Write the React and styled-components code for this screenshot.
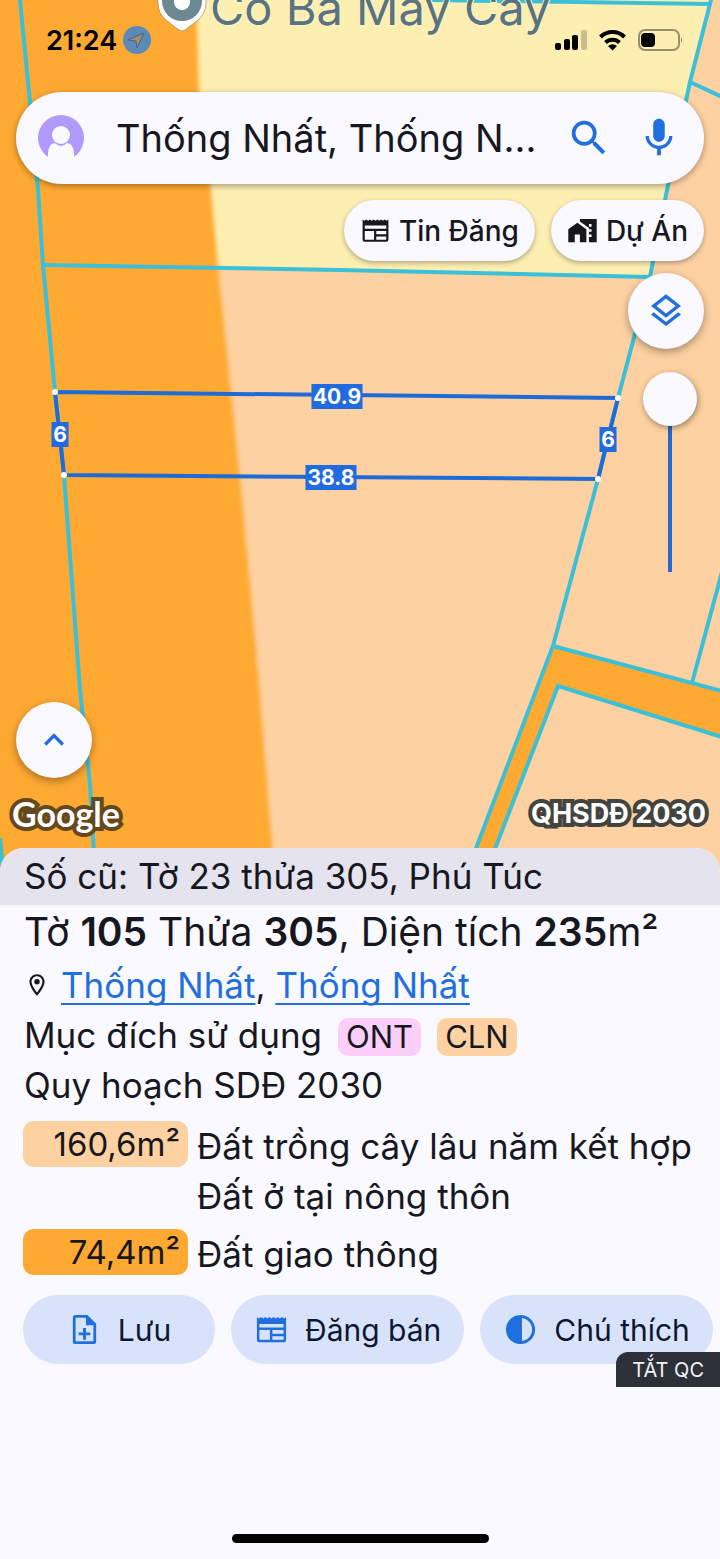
import React, { useState } from 'react';
import styled, { createGlobalStyle } from 'styled-components';
import {
  MdSearch,
  MdMic,
  MdHomeWork,
  MdOutlineLayers,
  MdKeyboardArrowUp,
  MdOutlineLocationOn,
  MdContrast,
} from 'react-icons/md';

const GlobalStyle = createGlobalStyle`
  * {
    box-sizing: border-box;
  }

  body {
    margin: 0;
    background: #faf9ff;
    color: #17181f;
    font-family: Inter, "Liberation Sans", sans-serif;
  }

  button, input {
    font-family: inherit;
    color: inherit;
  }
`;

const Page = styled.div`
  display: flex;
  flex-direction: column;
  min-height: 100vh;
`;

const MapArea = styled.section`
  position: relative;
  isolation: isolate;
  display: flex;
  flex-direction: column;
  flex: 1;
  overflow: hidden;
`;

const MapCanvas = styled.svg`
  position: absolute;
  z-index: -1;
  top: 0;
  left: 0;
  width: 100%;
  height: 100%;
`;

const MeasureText = styled.text`
  font-size: 21px;
  font-weight: 700;
  text-anchor: middle;
  fill: #fff;
`;

const PlaceName = styled.text`
  font-size: 47px;
  fill: #5a7380;
  stroke: #fff2c0;
  stroke-width: 2px;
  paint-order: stroke;
`;

const StatusBar = styled.header`
  display: flex;
  align-items: center;
  justify-content: space-between;
  height: 80px;
  padding: 0 37px 0 46px;
  margin-bottom: 12px;
`;

const StatusGroup = styled.div`
  display: flex;
  align-items: center;
  gap: ${props => props.$gap}px;
`;

const Clock = styled.time`
  font-size: 27px;
  font-weight: 600;
  color: #000;
`;

const SearchBar = styled.form`
  display: flex;
  align-items: center;
  height: 92px;
  margin: 0 16px;
  padding: 0 22px;
  border-radius: 46px;
  background: #faf9ff;
  box-shadow: 0 2px 6px rgba(0, 0, 0, 0.35);
`;

const SearchInput = styled.input`
  flex: 1;
  min-width: 0;
  margin: 0 16px 0 32px;
  padding: 0;
  border: 0;
  outline: 0;
  background: none;
  font-size: 38px;
  text-overflow: ellipsis;
`;

const IconButton = styled.button`
  display: flex;
  padding: 0;
  border: 0;
  background: none;
  color: #1f6fde;
  font-size: 46px;

  & + & {
    margin-left: 24px;
  }
`;

const Chips = styled.nav`
  display: flex;
  justify-content: flex-end;
  gap: 16px;
  padding: 16px 16px 12px;
`;

const Chip = styled.button`
  display: flex;
  align-items: center;
  gap: 8px;
  height: 61px;
  padding: 0 16px;
  border: 0;
  border-radius: 31px;
  background: #faf9ff;
  box-shadow: 0 2px 5px rgba(0, 0, 0, 0.3);
  font-size: 28px;
  font-weight: 500;
  white-space: nowrap;

  svg {
    width: 31px;
    height: 31px;
  }
`;

const Controls = styled.div`
  display: flex;
  flex-direction: column;
  align-items: flex-end;
  gap: 23px;
  padding: 0 16px;
`;

const RoundButton = styled.button`
  display: flex;
  align-items: center;
  justify-content: center;
  flex: none;
  width: 76px;
  height: 76px;
  padding: 0;
  border: 0;
  border-radius: 50%;
  background: #faf9ff;
  box-shadow: 0 3px 8px rgba(0, 0, 0, 0.35);
  color: #1f6fde;
  font-size: 40px;
`;

const OpacitySlider = styled.input`
  appearance: none;
  writing-mode: vertical-lr;
  direction: rtl;
  width: 54px;
  height: 200px;
  margin: 0 7px 0 0;
  background: linear-gradient(#2668cf, #2668cf) center / 4px 100% no-repeat;

  &::-webkit-slider-thumb {
    appearance: none;
    width: 54px;
    height: 54px;
    border-radius: 50%;
    background: #faf9ff;
    box-shadow: 1px 2px 6px rgba(0, 0, 0, 0.4);
  }
`;

const MapFooter = styled.footer`
  margin-top: auto;
  padding: 0 14px 38px 12px;
`;

const ExpandRow = styled.div`
  display: flex;
  padding: 0 4px 16px;
`;

const Credits = styled.div`
  display: flex;
  align-items: center;
  justify-content: space-between;
`;

const Outlined = styled.span`
  color: #fff;
  line-height: 40px;
  font-size: ${props => props.$size}px;
  font-weight: 700;
  font-family: ${props => props.$family || 'inherit'};
  -webkit-text-stroke: 8px ${props => props.$stroke};
  paint-order: stroke fill;
  stroke-linejoin: round;
`;

const Sheet = styled.main`
  position: relative;
  display: flex;
  flex-direction: column;
  margin-top: -24px;
  border-radius: 24px 24px 0 0;
  background: #faf9ff;
  overflow: hidden;
  font-size: 35px;
  line-height: 50px;
`;

const OldNumber = styled.p`
  margin: 0;
  padding: 3px 24px 4px;
  background: #e5e4ee;
  color: #17181f;
`;

const Details = styled.div`
  padding: 2px 16px 0 24px;
`;

const Title = styled.h1`
  margin: 0 0 3px;
  font-size: 39px;
  font-weight: 400;

  strong {
    font-weight: 600;
  }
`;

const Line = styled.p`
  display: flex;
  align-items: center;
  margin: 0;
  white-space: pre;
`;

const PinIcon = styled(MdOutlineLocationOn)`
  margin-right: 11px;
  font-size: 26px;
`;

const PlaceLink = styled.a`
  color: #1f6fde;
  text-decoration: underline;
  text-decoration-thickness: 2px;
  text-underline-offset: 5px;
  text-decoration-skip-ink: none;
`;

const Tag = styled.span`
  margin: 4px 0 0 16px;
  padding: 0 8px;
  border-radius: 10px;
  background: ${props => props.$color};
  font-size: 31px;
  line-height: 38px;
`;

const Areas = styled.dl`
  display: grid;
  grid-template-columns: 165px 1fr;
  gap: 8px 9px;
  margin: 11px 0 0;
  padding: 0 12px 0 23px;
`;

const AreaSize = styled.dt`
  align-self: start;
  padding-right: 8px;
  border-radius: 11px;
  background: ${props => props.$color};
  font-size: 33px;
  line-height: 46px;
  text-align: right;
`;

const AreaUse = styled.dd`
  margin: 0;
`;

const ActionBar = styled.div`
  display: flex;
  gap: 16px;
  padding: 16px 4px 0 23px;
  overflow: hidden;
`;

const Action = styled.button`
  display: flex;
  align-items: center;
  justify-content: center;
  flex: none;
  gap: 16px;
  height: 69px;
  min-width: 192px;
  padding: 0 23px;
  border: 0;
  border-radius: 35px;
  background: #d8e3fb;
  color: #0d1733;
  font-size: 30px;
  white-space: nowrap;

  svg {
    width: 35px;
    height: 35px;
    color: #1f6fde;
  }
`;

const HideAds = styled.button`
  position: relative;
  align-self: flex-end;
  margin-top: -12px;
  height: 35px;
  padding: 0 16px;
  border: 0;
  border-radius: 12px 0 0 0;
  background: #2e3038;
  color: #f3f1f8;
  font-size: 20px;
`;

const HomeIndicator = styled.div`
  align-self: center;
  width: 257px;
  height: 9px;
  margin: 147px 0 16px;
  border-radius: 5px;
  background: #000;
`;

const MEASURES = [
  { x: 337, y: 396, w: 51, label: '40.9' },
  { x: 331, y: 477, w: 51, label: '38.8' },
  { x: 60, y: 434, w: 17, label: '6' },
  { x: 608, y: 439, w: 17, label: '6' },
];

const CORNERS = [[55, 392], [618, 398], [598, 479], [64, 475]];

function ParcelMap() {
  return (
    <MapCanvas viewBox="0 0 720 872" preserveAspectRatio="xMidYMid slice">
      <defs>
        <filter id="soft" x="-5%" y="-5%" width="110%" height="110%">
          <feGaussianBlur stdDeviation="2" />
        </filter>
      </defs>
      <rect width="720" height="872" fill="#fdd1a1" />
      <path d="M190 -6H712L690 82 668 185 650 277 210 268Z" fill="#fdeeb2" />
      <path
        d="M-10 -10H196L199 90 211 190 218 268 240 480 256 650 275 882H-10Z"
        fill="#fea932"
        filter="url(#soft)"
      />
      <path d="M553 646L720 690V736L558 686 486 872H467Z" fill="#fea932" />
      <g fill="none" stroke="#3bc0d8" strokeWidth="4">
        <path d="M20 0L29 92 38 190 43 265 55 392 64 475 80 690 90 785 95 872" />
        <path d="M43 265L340 270 650 277" />
        <path d="M430 0L710 4" />
        <path d="M712 -4L690 82 668 185 650 277 618 398 598 479 553 646 467 872" />
        <path d="M690 82L722 97" />
        <path d="M553 646L722 691M722 572L692 683" />
        <path d="M722 737L558 686 486 872" />
        <path d="M0 838L3 872" />
      </g>
      <path
        d={`M${CORNERS.map(c => c.join(' ')).join('L')}Z`}
        fill="none"
        stroke="#1f6bd6"
        strokeWidth="4"
      />
      {CORNERS.map(([x, y]) => (
        <circle key={x} cx={x} cy={y} r="3" fill="#fff" />
      ))}
      {MEASURES.map(({ x, y, w, label }) => (
        <g key={`${x}-${label}`}>
          <rect x={x - w / 2} y={y - 12} width={w} height="25" fill="#1f6bdf" />
          <MeasureText x={x} y={y + 8}>{label}</MeasureText>
        </g>
      ))}
      <path
        d="M158 3a23 23 0 0 0 8 17l13 10q3 2 6 0l13-10a23 23 0 0 0 8-17v-10h-48z"
        fill="#fff"
        stroke="#7a6a50"
        strokeOpacity=".5"
      />
      <circle cx="182" cy="1" r="20" fill="#6c8893" />
      <circle cx="182" cy="2" r="8" fill="#fff" />
      <PlaceName x="210" y="25">Co Ba May Cay</PlaceName>
    </MapCanvas>
  );
}

function NewsIcon() {
  return (
    <svg viewBox="0 0 24 24" fill="currentColor" aria-hidden="true">
      <path
        fillRule="evenodd"
        d="M2 3.400L3.400 4.500 4.900 3.400 6.300 4.500 7.700 3.400 9.100 4.500 10.600 3.400 12 4.500 13.400 3.400 14.900 4.500 16.300 3.400 17.700 4.500 19.100 3.400 20.600 4.500 22 3.400V19.200Q22 20.800 20.400 20.800H3.600Q2 20.800 2 19.200ZM3.700 8.200V10.700H20.300V8.200ZM3.700 12.400V19.100H10.900V12.400ZM12.600 12.400V14.900H20.300V12.400ZM12.600 16.600V19.100H20.300V16.600Z"
      />
    </svg>
  );
}

function SaveIcon() {
  return (
    <svg viewBox="0 0 24 24" fill="currentColor" aria-hidden="true">
      <path
        fillRule="evenodd"
        d="M6 2H14L20 8V20Q20 22 18 22H6Q4 22 4 20V4Q4 2 6 2ZM5.900 3.900V20.100H18.100V9H13V3.900Z"
      />
      <path d="M11 11H13V14H16V16H13V19H11V16H8V14H11Z" />
    </svg>
  );
}

function LocationBadge() {
  return (
    <svg width="28" height="28" viewBox="0 0 28 28">
      <circle cx="14" cy="14" r="14" fill="#5a8ab8" />
      <path d="M21 7L5 14l8 1 1 7z" fill="#a48c72" stroke="#4a6580" strokeLinejoin="round" />
    </svg>
  );
}

function StatusIcons() {
  return (
    <svg width="128" height="24" viewBox="0 0 128 24">
      <rect x="0" y="15" width="6" height="7" rx="2" />
      <rect x="9" y="11" width="6" height="11" rx="2" />
      <rect x="17" y="7" width="6" height="15" rx="2" />
      <rect x="26" y="2" width="6" height="20" rx="2" opacity=".2" />
      <g fill="none" stroke="#000" strokeWidth="4">
        <path d="M45.500 9a17 17 0 0 1 24 0" />
        <path d="M50.500 14.500a10 10 0 0 1 14 0" />
      </g>
      <path d="M53 18a7 7 0 0 1 9 0l-4.500 4.500z" />
      <rect x="84" y="2" width="40" height="20" rx="6" fill="none" stroke="#000" strokeOpacity=".4" strokeWidth="2" />
      <rect x="86" y="5" width="14" height="14" rx="4" />
      <path d="M126 9q2 3 0 6z" opacity=".5" />
    </svg>
  );
}

function Avatar() {
  return (
    <svg width="46" height="46" viewBox="0 0 46 46" aria-hidden="true">
      <circle cx="23" cy="23" r="23" fill="#b09afc" />
      <path d="M10 46V38Q11 28 17 28Q23 34 29 28Q35 28 36 38V46Z" fill="#faf9ff" />
      <circle cx="23" cy="20" r="9" fill="#faf9ff" />
    </svg>
  );
}

function App() {
  const [query, setQuery] = useState('Thống Nhất, Thống N...');
  const [opacity, setOpacity] = useState(100);

  return (
    <Page>
      <GlobalStyle />
      <MapArea>
        <ParcelMap />
        <StatusBar>
          <StatusGroup $gap={6}>
            <Clock>21:24</Clock>
            <LocationBadge />
          </StatusGroup>
          <StatusIcons />
        </StatusBar>
        <SearchBar onSubmit={e => e.preventDefault()}>
          <Avatar />
          <SearchInput
            aria-label="Tìm kiếm"
            value={query}
            onChange={e => setQuery(e.target.value)}
          />
          <IconButton type="submit" aria-label="Tìm"><MdSearch /></IconButton>
          <IconButton type="button" aria-label="Giọng nói"><MdMic /></IconButton>
        </SearchBar>
        <Chips>
          <Chip type="button"><NewsIcon />Tin Đăng</Chip>
          <Chip type="button"><MdHomeWork />Dự Án</Chip>
        </Chips>
        <Controls>
          <RoundButton type="button" aria-label="Lớp bản đồ"><MdOutlineLayers /></RoundButton>
          <OpacitySlider
            type="range"
            aria-label="Độ mờ"
            value={opacity}
            onChange={e => setOpacity(Number(e.target.value))}
          />
        </Controls>
        <MapFooter>
          <ExpandRow>
            <RoundButton type="button" aria-label="Mở rộng"><MdKeyboardArrowUp /></RoundButton>
          </ExpandRow>
          <Credits>
            <Outlined $size={34} $family="Lato, sans-serif" $stroke="#66481f">Google</Outlined>
            <Outlined $size={27} $stroke="#44443f">QHSDĐ 2030</Outlined>
          </Credits>
        </MapFooter>
      </MapArea>
      <Sheet>
        <OldNumber>Số cũ: Tờ 23 thửa 305, Phú Túc</OldNumber>
        <Details>
          <Title>
            Tờ <strong>105</strong> Thửa <strong>305</strong>, Diện tích <strong>235</strong>m²
          </Title>
          <Line>
            <PinIcon />
            <PlaceLink href="#xa">Thống Nhất</PlaceLink>
            <span>, </span>
            <PlaceLink href="#huyen">Thống Nhất</PlaceLink>
          </Line>
          <Line>
            Mục đích sử dụng
            <Tag $color="#fbcffa">ONT</Tag>
            <Tag $color="#fdd1a1">CLN</Tag>
          </Line>
          <Line>Quy hoạch SDĐ 2030</Line>
        </Details>
        <Areas>
          <AreaSize $color="#fdd1a1">160,6m²</AreaSize>
          <AreaUse>Đất trồng cây lâu năm kết hợp Đất ở tại nông thôn</AreaUse>
          <AreaSize $color="#fea932">74,4m²</AreaSize>
          <AreaUse>Đất giao thông</AreaUse>
        </Areas>
        <ActionBar>
          <Action type="button"><SaveIcon />Lưu</Action>
          <Action type="button"><NewsIcon />Đăng bán</Action>
          <Action type="button"><MdContrast />Chú thích</Action>
        </ActionBar>
        <HideAds type="button">TẮT QC</HideAds>
        <HomeIndicator />
      </Sheet>
    </Page>
  );
}

export default App;
